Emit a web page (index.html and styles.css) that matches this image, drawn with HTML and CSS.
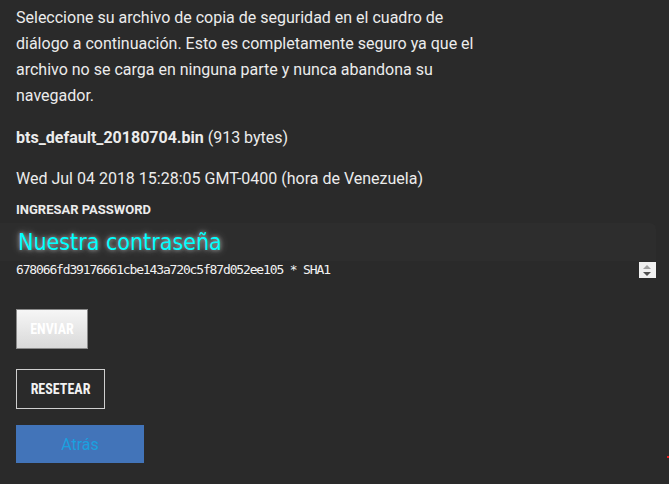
FILE: index.html
```html
<!DOCTYPE html>
<html lang="es">
<head>
  <meta charset="UTF-8">
  <title>Restaurar copia de seguridad</title>
  <link rel="stylesheet" href="styles.css">
</head>
<body>
  <div class="restore">
    <p class="intro">
      Seleccione su archivo de copia de seguridad en el cuadro de diálogo a continuación. Esto es completamente seguro ya que el archivo no se carga en ninguna parte y nunca abandona su navegador.
    </p>

    <p class="file-name"><b>bts_default_20180704.bin</b> (913 bytes)</p>
    <p class="file-date">Wed Jul 04 2018 15:28:05 GMT-0400 (hora de Venezuela)</p>

    <label class="pass-label" for="pass">INGRESAR PASSWORD</label>
    <div class="pass-box">
      <span class="pass-text" id="pass">Nuestra contraseña</span>
    </div>
    <div class="hash-row">
      <span class="hash">678066fd39176661cbe143a720c5f87d052ee105 * SHA1</span>
      <span class="spinner">
        <svg width="16" height="16" viewBox="0 0 16 16">
          <polygon points="8,3 4,7 12,7" fill="#a0a0a0"/>
          <polygon points="4,10 12,10 8,14" fill="#505050"/>
        </svg>
      </span>
    </div>

    <div class="actions">
      <button class="btn btn-send" type="button">ENVIAR</button>
      <button class="btn btn-reset" type="button">RESETEAR</button>
      <button class="btn btn-back" type="button">Atrás</button>
    </div>
  </div>
  <span class="dot"></span>
</body>
</html>
```

FILE: styles.css
```css
* {
  box-sizing: border-box;
  margin: 0;
  padding: 0;
}

html, body {
  overflow: hidden;
}

body {
  background-color: #2a2a2a;
  color: #ececec;
  font-family: Roboto, "Liberation Sans", sans-serif;
  height: 100vh;
  position: relative;
}

.restore {
  padding: 5px 0 0 16px;
}

.intro {
  width: 470px;
  font-size: 16px;
  line-height: 26px;
}

.file-name {
  margin-top: 19px;
  font-size: 16px;
  line-height: 20px;
}

.file-name b {
  font-weight: 700;
}

.file-date {
  margin-top: 20px;
  font-size: 16px;
  line-height: 22px;
}

.pass-label {
  display: block;
  margin-top: 12px;
  font-size: 13px;
  font-weight: 700;
  line-height: 16px;
}

.pass-box {
  margin: 5px 13px 0 -16px;
  padding: 0 0 0 18px;
  height: 38px;
  background-color: #2d2d2d;
  border-top-right-radius: 6px;
  display: flex;
  align-items: center;
}

.pass-text {
  font-family: "DejaVu Sans Condensed", "DejaVu Sans", sans-serif;
  font-size: 23px;
  color: #00ffff;
  text-shadow: 0 0 4px rgba(255, 255, 255, 0.6), 0 0 10px rgba(255, 255, 255, 0.4);
}

.hash-row {
  display: flex;
  align-items: center;
  justify-content: space-between;
  margin-right: 13px;
  height: 17px;
}

.hash {
  font-family: "DejaVu Sans Mono", "Liberation Mono", monospace;
  font-size: 13px;
  letter-spacing: -1.15px;
  color: #f2f2f2;
}

.spinner {
  width: 17px;
  height: 16px;
  background-color: #f0f0f0;
  display: flex;
}

.actions {
  margin-top: 31px;
  display: flex;
  flex-direction: column;
  align-items: flex-start;
  gap: 20px;
}

.btn {
  font-family: "Liberation Sans Narrow", "Roboto Condensed", "Liberation Sans", sans-serif;
  font-size: 14px;
  font-weight: 700;
  cursor: pointer;
}

.btn-send {
  width: 72px;
  height: 40px;
  color: #fff;
  background: linear-gradient(#f6f6f6, #d9d9d9);
  border: 1px solid #8a8a8a;
}

.btn-reset {
  width: 89px;
  height: 40px;
  color: #f2f2f2;
  background: transparent;
  border: 1px solid #cfcfcf;
}

.btn-back {
  width: 128px;
  height: 38px;
  margin-top: -4px;
  font-family: Roboto, "Liberation Sans", sans-serif;
  font-weight: 400;
  font-size: 16px;
  color: #1aa0df;
  background-color: #4274b9;
  border: none;
}

.dot {
  position: absolute;
  left: 667px;
  top: 456px;
  width: 2px;
  height: 2px;
  background-color: #e02020;
}
```
